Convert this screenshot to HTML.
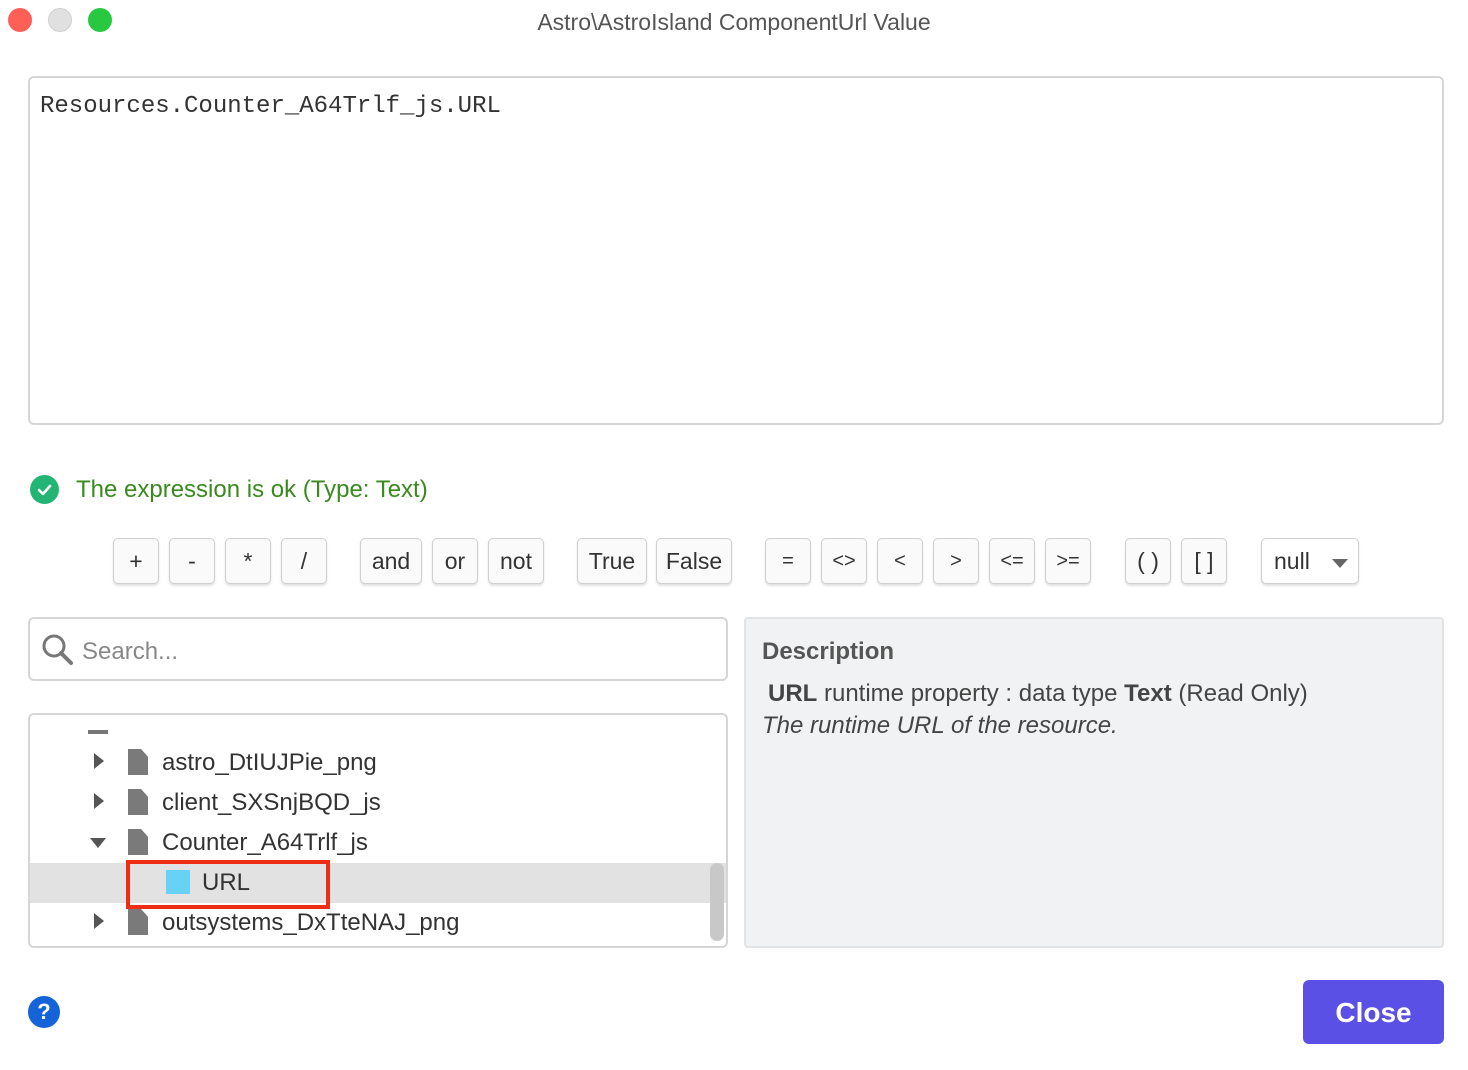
<!DOCTYPE html>
<html><head><style>
*{box-sizing:border-box;margin:0;padding:0}
body{width:1468px;height:1070px;background:#fff;position:relative;font-family:"Liberation Sans",sans-serif;overflow:hidden;color:#333}
.a{position:absolute}
.dot{position:absolute;top:8px;width:24px;height:24px;border-radius:50%}
.btn{position:absolute;top:538px;height:46px;border:1px solid #cfcfcf;border-radius:5px;background:#fafafa;box-shadow:0 2px 2px rgba(0,0,0,.12);font-size:23px;color:#333;display:flex;align-items:center;justify-content:center}
.tri{position:absolute;left:94px;width:0;height:0}
.file{position:absolute;left:128px;width:20px;height:26px;background:#7a7a7a;clip-path:polygon(0 0,65% 0,100% 30%,100% 100%,0 100%)}
</style></head><body>
<div class="dot" style="left:8px;background:#fe5f57"></div>
<div class="dot" style="left:48px;background:#e0e0e0;border:1px solid #d0d0d0"></div>
<div class="dot" style="left:88px;background:#28c840"></div>
<div class="a" style="left:0;width:1468px;top:9px;text-align:center;font-size:23px;color:#555">Astro\AstroIsland ComponentUrl Value</div>

<div class="a" style="left:28px;top:76px;width:1416px;height:349px;border:2px solid #d6d6d6;border-radius:6px"></div>
<div class="a" style="left:40px;top:93px;font-family:'Liberation Mono',monospace;font-size:24px;color:#333">Resources.Counter_A64Trlf_js.URL</div>

<div class="a" style="left:30px;top:475px;width:29px;height:29px;border-radius:50%;background:#23b573"></div>
<svg class="a" style="left:30px;top:475px" width="29" height="29"><path d="M9 15 L13 19 L20 11" stroke="#fff" stroke-width="2.6" fill="none" stroke-linecap="round" stroke-linejoin="round"/></svg>
<div class="a" style="left:76px;top:476px;font-size:24px;color:#3a8a1f">The expression is ok (Type: Text)</div>

<div class="btn" style="left:113px;width:46px">+</div>
<div class="btn" style="left:169px;width:46px">-</div>
<div class="btn" style="left:225px;width:46px">*</div>
<div class="btn" style="left:281px;width:46px">/</div>
<div class="btn" style="left:360px;width:62px">and</div>
<div class="btn" style="left:432px;width:46px">or</div>
<div class="btn" style="left:488px;width:56px">not</div>
<div class="btn" style="left:577px;width:70px">True</div>
<div class="btn" style="left:656px;width:76px">False</div>
<div class="btn" style="left:765px;width:46px;font-size:20px">=</div>
<div class="btn" style="left:821px;width:46px;font-size:20px">&lt;&gt;</div>
<div class="btn" style="left:877px;width:46px;font-size:20px">&lt;</div>
<div class="btn" style="left:933px;width:46px;font-size:20px">&gt;</div>
<div class="btn" style="left:989px;width:46px;font-size:20px">&lt;=</div>
<div class="btn" style="left:1045px;width:46px;font-size:20px">&gt;=</div>
<div class="btn" style="left:1125px;width:46px">( )</div>
<div class="btn" style="left:1181px;width:46px">[ ]</div>
<div class="btn" style="left:1261px;width:98px;justify-content:flex-start;padding-left:12px;background:#fff">null<span style="position:absolute;right:10px;top:20px;border-left:8px solid transparent;border-right:8px solid transparent;border-top:9px solid #666"></span></div>

<div class="a" style="left:28px;top:617px;width:700px;height:64px;border:2px solid #d6d6d6;border-radius:6px"></div>
<svg class="a" style="left:40px;top:632px" width="36" height="36"><circle cx="14" cy="14" r="10" stroke="#777" stroke-width="3" fill="none"/><path d="M21 21 L31 31" stroke="#777" stroke-width="4" stroke-linecap="round"/></svg>
<div class="a" style="left:82px;top:638px;font-size:24px;color:#888">Search...</div>

<div class="a" style="left:28px;top:713px;width:700px;height:235px;border:2px solid #d6d6d6;border-radius:6px;overflow:hidden">
 <div class="a" style="left:0;top:148px;width:696px;height:40px;background:#e2e2e2"></div>
 <div class="a" style="left:58px;top:15px;width:20px;height:4px;background:#777"></div>
 <div class="a" style="left:680px;top:148px;width:14px;height:78px;border-radius:7px;background:#c8c8c8"></div>
</div>
<div class="tri" style="top:753px;border-top:8px solid transparent;border-bottom:8px solid transparent;border-left:10px solid #555"></div>
<div class="file" style="top:749px"></div>
<div class="a" style="left:162px;top:749px;font-size:24px">astro_DtIUJPie_png</div>
<div class="tri" style="top:793px;border-top:8px solid transparent;border-bottom:8px solid transparent;border-left:10px solid #555"></div>
<div class="file" style="top:789px"></div>
<div class="a" style="left:162px;top:789px;font-size:24px">client_SXSnjBQD_js</div>
<div class="tri" style="left:90px;top:838px;border-left:8px solid transparent;border-right:8px solid transparent;border-top:10px solid #555"></div>
<div class="file" style="top:829px"></div>
<div class="a" style="left:162px;top:829px;font-size:24px">Counter_A64Trlf_js</div>
<div class="a" style="left:166px;top:870px;width:24px;height:24px;background:#68d2f6"></div>
<div class="a" style="left:202px;top:869px;font-size:24px">URL</div>
<div class="a" style="left:126px;top:860px;width:204px;height:49px;border:4px solid #ef2c14"></div>
<div class="tri" style="top:913px;border-top:8px solid transparent;border-bottom:8px solid transparent;border-left:10px solid #555"></div>
<div class="file" style="top:909px"></div>
<div class="a" style="left:162px;top:909px;font-size:24px">outsystems_DxTteNAJ_png</div>

<div class="a" style="left:744px;top:617px;width:700px;height:331px;background:#f1f2f3;border:2px solid #e2e3e5;border-radius:4px"></div>
<div class="a" style="left:762px;top:638px;font-size:24px;font-weight:bold;color:#555">Description</div>
<div class="a" style="left:768px;top:680px;font-size:24px;color:#444"><b>URL</b> runtime property : data type <b>Text</b> (Read Only)</div>
<div class="a" style="left:762px;top:712px;font-size:24px;font-style:italic;color:#444">The runtime URL of the resource.</div>

<div class="a" style="left:28px;top:996px;width:32px;height:32px;border-radius:50%;background:#1463d8;color:#fff;font-weight:bold;font-size:22px;text-align:center;line-height:32px">?</div>
<div class="a" style="left:1303px;top:980px;width:141px;height:64px;border-radius:6px;background:#5a50e6;color:#fff;font-weight:bold;font-size:28px;text-align:center;line-height:66px">Close</div>
</body></html>
